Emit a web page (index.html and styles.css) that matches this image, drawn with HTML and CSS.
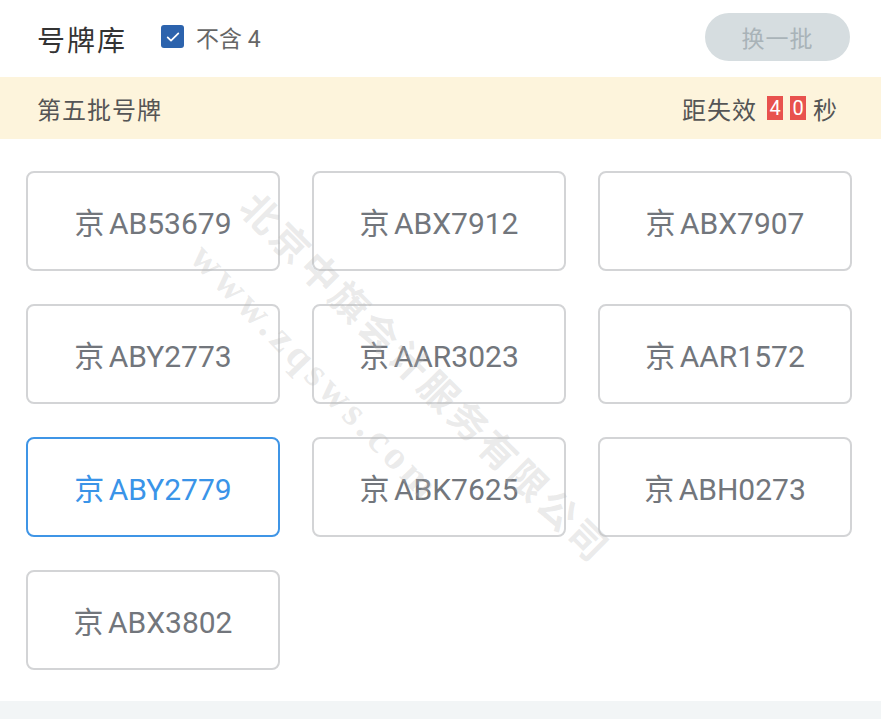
FILE: index.html
```html
<!DOCTYPE html>
<html lang="zh-CN">
<head>
    <meta charset="UTF-8">
    <meta name="viewport" content="width=device-width, initial-scale=1.0">
    <title>号牌库</title>
    <link rel="stylesheet" href="styles.css">
</head>
<body>
    <div class="page">
        <div class="top-bar">
            <h3 class="title">号牌库</h3>
            <label class="filter">
                <span class="check">
                    <svg viewBox="0 0 24 24" width="16" height="16"><path d="M4 12.5l5 5L20 6.5" fill="none" stroke="#fff" stroke-width="2.6" stroke-linecap="round" stroke-linejoin="round"/></svg>
                </span>
                不含 4
            </label>
            <button class="refresh" disabled>换一批</button>
        </div>

        <div class="batch-bar">
            <span class="batch-name">第五批号牌</span>
            <span class="countdown">距失效<b class="digit">4</b><b class="digit">0</b><span class="unit">秒</span></span>
        </div>

        <div class="plate-list">
            <div class="plate">京 AB53679</div>
            <div class="plate">京 ABX7912</div>
            <div class="plate">京 ABX7907</div>
            <div class="plate">京 ABY2773</div>
            <div class="plate">京 AAR3023</div>
            <div class="plate">京 AAR1572</div>
            <div class="plate active">京 ABY2779</div>
            <div class="plate">京 ABK7625</div>
            <div class="plate">京 ABH0273</div>
            <div class="plate">京 ABX3802</div>
        </div>

        <div class="footer-strip"></div>

        <div class="watermark">
            <div class="wm-name">北京中旗会计服务有限公司</div>
            <div class="wm-site">www.zqsws.com</div>
        </div>
    </div>
</body>
</html>
```

FILE: styles.css
```css
body {
    margin: 0;
    padding: 0;
    background-color: #fff;
    font-family: Roboto, "Noto Sans CJK SC", sans-serif;
}

.page {
    position: relative;
    width: 881px;
    height: 719px;
    overflow: hidden;
    display: flex;
    flex-direction: column;
}

.top-bar {
    height: 77px;
    display: flex;
    align-items: center;
    padding: 0 31px 0 37px;
    box-sizing: border-box;
}

.title {
    margin: 0;
    font-weight: 400;
    font-size: 28px;
    color: #333;
    letter-spacing: 2px;
}

.filter {
    display: flex;
    align-items: center;
    margin-left: 34px;
    margin-top: -4px;
    font-size: 23px;
    color: #666;
}

.check {
    width: 23px;
    height: 23px;
    border-radius: 3px;
    background-color: #2c63ad;
    display: flex;
    align-items: center;
    justify-content: center;
    margin-right: 12px;
}

.refresh {
    margin-left: auto;
    margin-top: -4px;
    width: 145px;
    height: 48px;
    border: none;
    border-radius: 24px;
    background-color: #d6dde0;
    color: #a9b3b8;
    font-family: "Noto Sans CJK SC", sans-serif;
    font-size: 23px;
    letter-spacing: 1px;
}

.batch-bar {
    height: 62px;
    background-color: #fdf4dc;
    display: flex;
    align-items: center;
    justify-content: space-between;
    padding: 0 43px 0 37px;
    font-size: 24px;
    color: #555;
    letter-spacing: 1px;
}

.countdown {
    display: flex;
    align-items: center;
}

.digit {
    display: inline-block;
    width: 16px;
    height: 24px;
    line-height: 24px;
    margin-left: 10px;
    text-align: center;
    background-color: #e8524e;
    color: #fff;
    font-family: Roboto, sans-serif;
    font-weight: 400;
    font-size: 20px;
    letter-spacing: 0;
}

.digit + .digit {
    margin-left: 7px;
}

.unit {
    margin-left: 7px;
}

.plate-list {
    flex: 1;
    display: grid;
    grid-template-columns: repeat(3, 254px);
    grid-auto-rows: 100px;
    column-gap: 32px;
    row-gap: 33px;
    align-content: start;
    padding: 32px 0 0 26px;
}

.plate {
    border: 2px solid #d3d4d6;
    border-radius: 8px;
    display: flex;
    align-items: center;
    justify-content: center;
    font-size: 30px;
    color: #72767c;
    box-sizing: border-box;
    word-spacing: -3px;
}

.plate.active {
    border-color: #3f95e6;
    color: #3a94e8;
}

.footer-strip {
    height: 18px;
    background-color: #f2f5f6;
}

.watermark {
    position: absolute;
    left: 0;
    top: 0;
    width: 100%;
    height: 100%;
    pointer-events: none;
    color: rgba(185, 185, 185, 0.3);
    font-weight: 700;
}

.wm-name {
    position: absolute;
    left: 262px;
    top: 185px;
    white-space: nowrap;
    font-family: "Noto Sans CJK SC", serif;
    font-size: 38px;
    line-height: 38px;
    letter-spacing: 4px;
    transform-origin: left top;
    transform: rotate(45deg);
}

.wm-site {
    position: absolute;
    left: 212px;
    top: 236px;
    white-space: nowrap;
    font-family: "Liberation Serif", serif;
    font-size: 40px;
    line-height: 40px;
    letter-spacing: 5px;
    transform-origin: left top;
    transform: rotate(46deg);
}
```
